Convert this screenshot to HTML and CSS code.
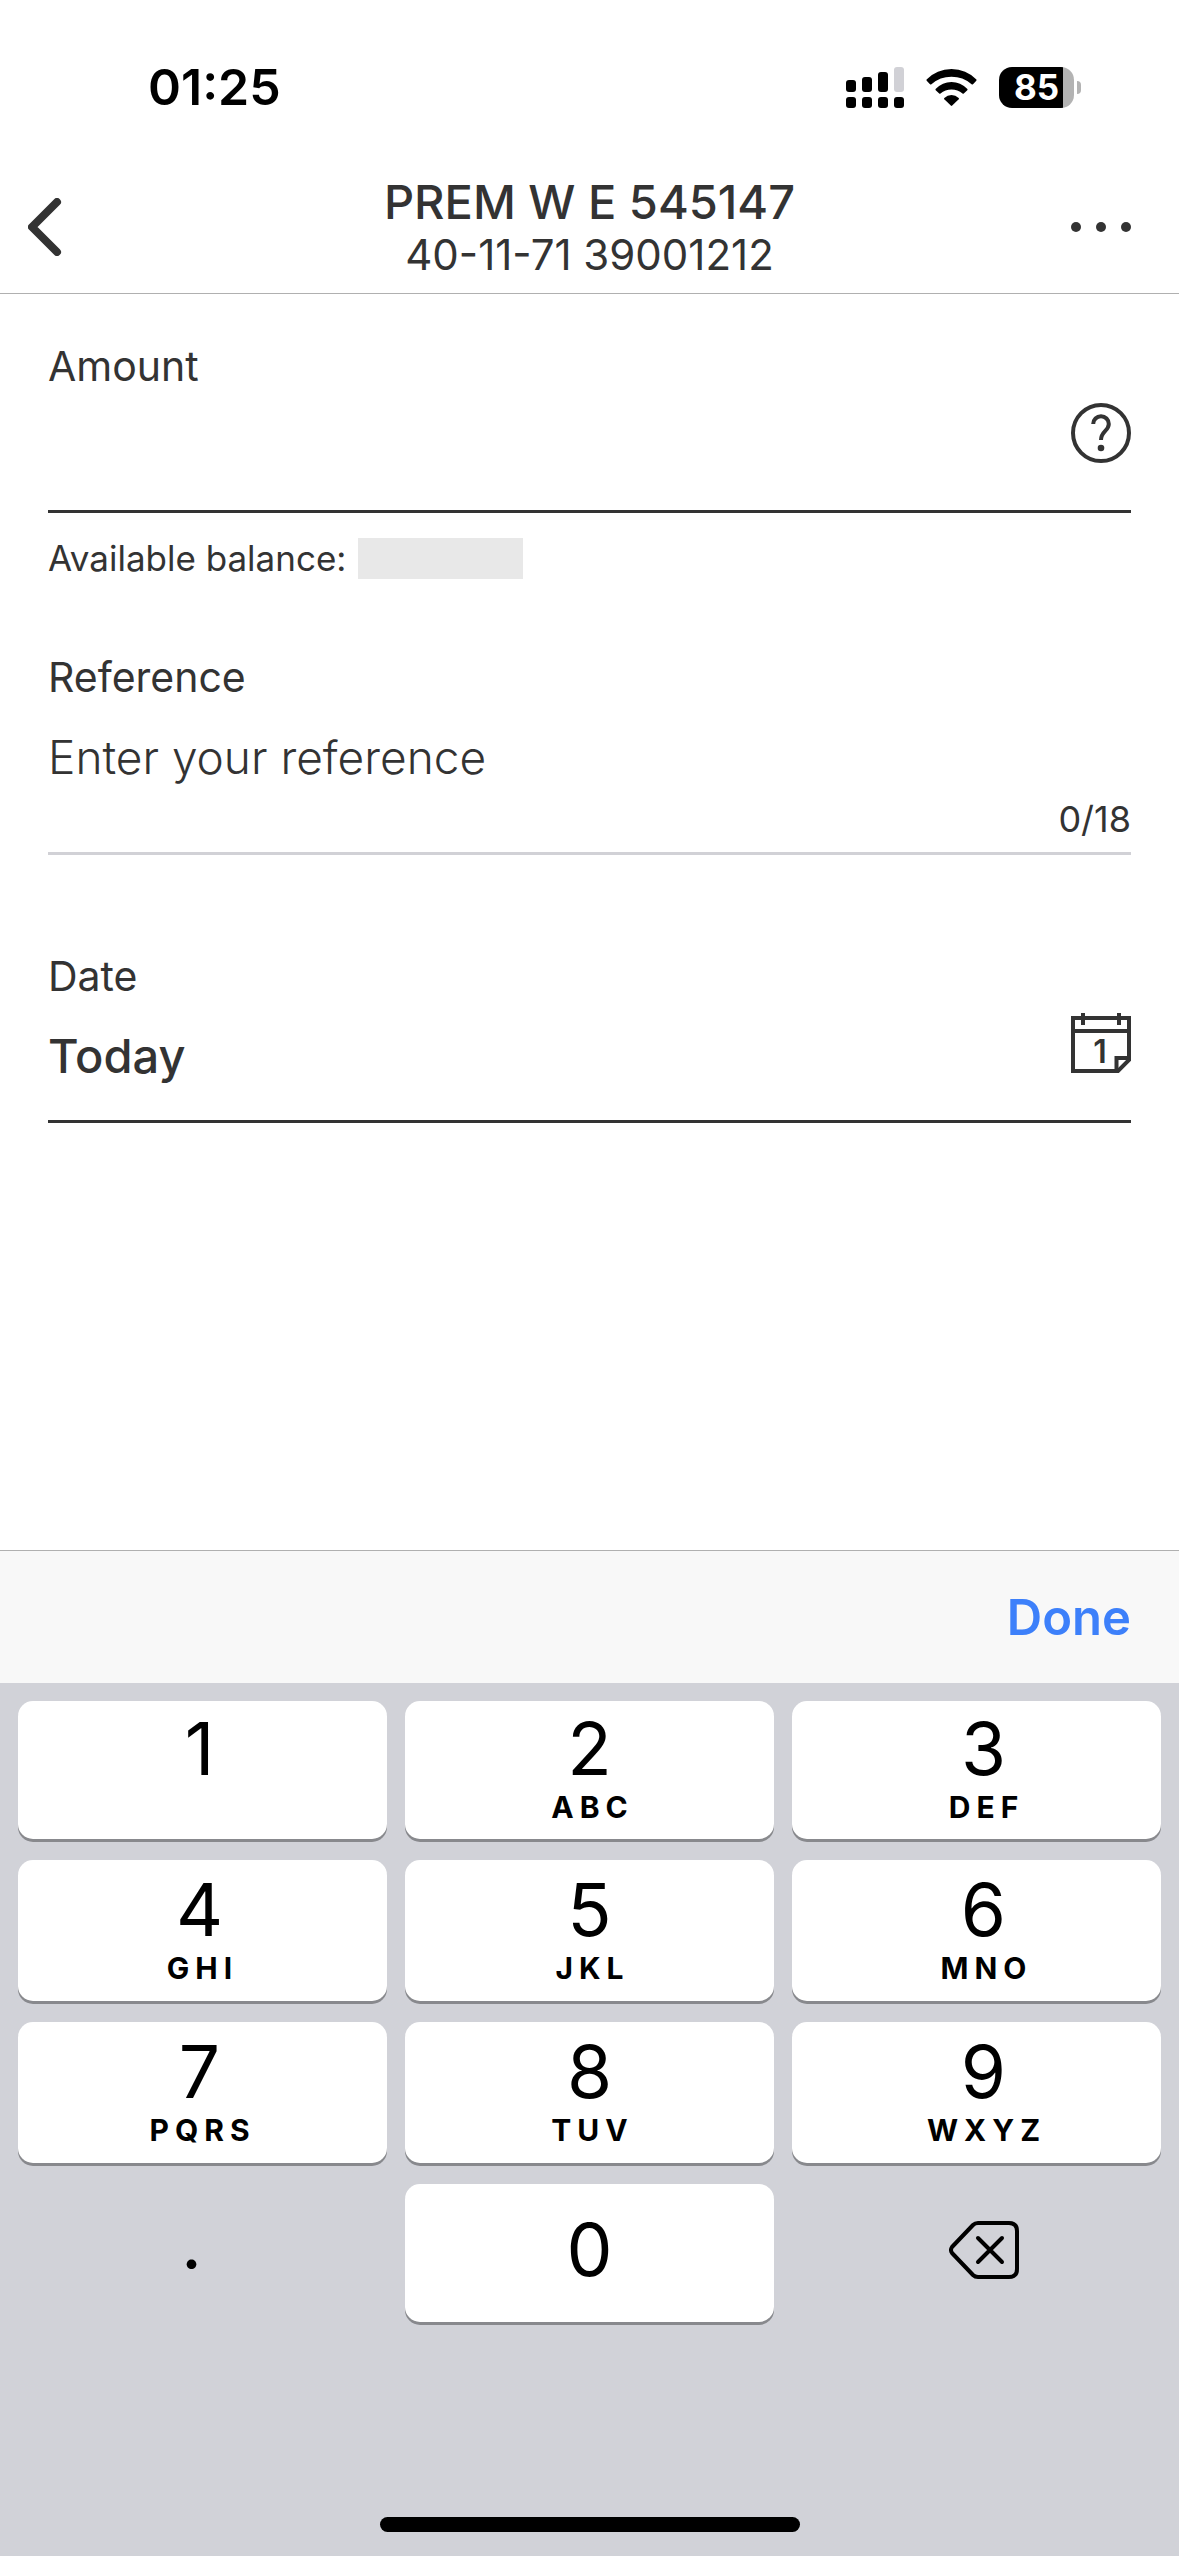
FILE: index.html
```html
<!DOCTYPE html>
<html lang="en">
<head>
  <meta charset="UTF-8">
  <meta name="viewport" content="width=device-width, initial-scale=1">
  <title>Make a payment</title>
  <link rel="stylesheet" href="styles.css">
</head>
<body>
  <div class="status-bar">
    <div class="time">01:25</div>
    <div class="status-icons">
      <svg class="signal" width="58" height="41" viewBox="0 0 58 41">
        <rect x="0" y="13" width="10" height="12" rx="3"/>
        <rect x="16" y="10" width="10" height="15" rx="3"/>
        <rect x="32" y="5" width="10" height="20" rx="3"/>
        <rect x="48" y="0" width="10" height="25" rx="3" fill="#d1d1d6"/>
        <rect x="0" y="30" width="10" height="11" rx="3"/>
        <rect x="16" y="30" width="10" height="11" rx="3"/>
        <rect x="32" y="30" width="10" height="11" rx="3"/>
        <rect x="48" y="30" width="10" height="11" rx="3"/>
      </svg>
      <svg class="wifi" width="51" height="37" viewBox="0 0 51 37">
        <path d="M0.6 10.6Q10.8 0 25.5 0T50.4 10.6Q50.8 11.2 50.3 11.8L47 15.2Q46.3 15.8 45.6 15.2Q37 7.8 25.5 7.8T5.4 15.2Q4.7 15.8 4 15.2L0.7 11.8Q0.2 11.2 0.6 10.6Z"/>
        <path d="M9.6 20Q16.5 13 25.5 13T41.4 20Q41.8 20.6 41.3 21.2L37.8 24.6Q37.2 25.1 36.5 24.6Q31.8 20.6 25.5 20.6T14.5 24.6Q13.8 25.1 13.2 24.6L9.7 21.2Q9.2 20.6 9.6 20Z"/>
        <path d="M18.3 29.1Q21.5 25.9 25.5 25.9T32.7 29.1Q33.2 29.7 32.7 30.3L26.2 36.6Q25.5 37.2 24.8 36.6L18.3 30.3Q17.8 29.7 18.3 29.1Z"/>
      </svg>
      <div class="battery"><span class="battery-level">85</span><span class="battery-cap"></span></div>
    </div>
  </div>

  <header class="nav">
    <button class="nav-button back" aria-label="Back">
      <svg width="34" height="58" viewBox="0 0 34 58">
        <path d="M29 4L4 29L29 54" fill="none" stroke="#333" stroke-width="8" stroke-linecap="round" stroke-linejoin="round"/>
      </svg>
    </button>
    <div class="account">
      <h1>PREM W E 545147</h1>
      <p>40-11-71 39001212</p>
    </div>
    <button class="nav-button more" aria-label="More">
      <svg width="60" height="10" viewBox="0 0 60 10" fill="#333">
        <circle cx="5" cy="5" r="5"/>
        <circle cx="30" cy="5" r="5"/>
        <circle cx="55" cy="5" r="5"/>
      </svg>
    </button>
  </header>

  <main class="form">
    <div class="field">
      <label for="amount">Amount</label>
      <div class="control">
        <input type="text" id="amount" inputmode="decimal">
        <button class="icon-button" aria-label="Help">
          <svg width="60" height="60" viewBox="0 0 60 60" fill="none" stroke="#333" stroke-width="4">
            <circle cx="30" cy="30" r="28"/>
            <path d="M22.200 21A7.800 7.800 0 0 1 37.800 21C37.800 28 30 28 30 37"/>
            <circle cx="30" cy="45" r="3.3" fill="#333" stroke="none"/>
          </svg>
        </button>
      </div>
      <p class="balance">Available balance: <span class="hidden-balance"></span></p>
    </div>

    <div class="field">
      <label for="reference">Reference</label>
      <div class="control with-counter">
        <input type="text" id="reference" maxlength="18" placeholder="Enter your reference">
        <div class="counter">0/18</div>
      </div>
    </div>

    <div class="field date">
      <label for="date">Date</label>
      <div class="control">
        <input type="text" id="date" value="Today" readonly>
        <button class="icon-button" aria-label="Choose date">
          <svg width="60" height="60" viewBox="0 0 60 60" fill="none" stroke="#333" stroke-width="4">
            <path d="M2 5H58V47L47 58H2Z"/>
            <path d="M2 18H58M12 0V12M48 0V12"/>
            <path d="M45.500 58V45H58"/>
            <text class="calendar-day" x="29" y="50">1</text>
          </svg>
        </button>
      </div>
    </div>
  </main>

  <div class="toolbar"><button class="done">Done</button></div>

  <div class="keyboard">
    <div class="keys">
      <button class="key"><span class="digit">1</span><span class="letters"></span></button>
      <button class="key"><span class="digit">2</span><span class="letters">ABC</span></button>
      <button class="key"><span class="digit">3</span><span class="letters">DEF</span></button>
      <button class="key"><span class="digit">4</span><span class="letters">GHI</span></button>
      <button class="key"><span class="digit">5</span><span class="letters">JKL</span></button>
      <button class="key"><span class="digit">6</span><span class="letters">MNO</span></button>
      <button class="key"><span class="digit">7</span><span class="letters">PQRS</span></button>
      <button class="key"><span class="digit">8</span><span class="letters">TUV</span></button>
      <button class="key"><span class="digit">9</span><span class="letters">WXYZ</span></button>
      <button class="key last-row plain point"><span class="digit">.</span></button>
      <button class="key last-row"><span class="digit">0</span></button>
      <button class="key last-row plain" aria-label="Delete">
        <svg width="70" height="60" viewBox="0 0 70 60" fill="none" stroke="#000" stroke-width="4" stroke-linecap="round" stroke-linejoin="round">
          <path d="M29 3H60Q68 3 68 11V49Q68 57 60 57H29Q26 57 24 55L3 33Q1 30 3 27L24 5Q26 3 29 3Z"/>
          <path d="M29 18L53 42M53 18L29 42"/>
        </svg>
      </button>
    </div>
    <div class="home-indicator"></div>
  </div>
</body>
</html>
```
FILE: styles.css
```css
* {
  box-sizing: border-box;
}

body {
  display: flex;
  flex-direction: column;
  min-height: 100vh;
  margin: 0;
  background: #fff;
  color: #333;
  font-family: Inter, "Liberation Sans", sans-serif;
}

h1, p {
  margin: 0;
}

button {
  padding: 0;
  border: none;
  background: none;
  color: inherit;
  font: inherit;
  cursor: pointer;
}

svg {
  display: block;
}

/* status bar */
.status-bar {
  display: flex;
  justify-content: space-between;
  align-items: center;
  height: 174px;
  padding: 0 98px 0 148px;
  color: #000;
}

.time {
  font-size: 50px;
  font-weight: 600;
}

.status-icons {
  display: flex;
  align-items: center;
  gap: 22px;
}

.battery {
  display: flex;
  align-items: center;
  gap: 3px;
}

.battery-level {
  width: 75px;
  height: 41px;
  border-radius: 13px;
  background: linear-gradient(to right, #000 85%, #b3b3b3 85%);
  color: #fff;
  font-size: 35px;
  font-weight: 700;
  line-height: 41px;
  text-align: center;
}

.battery-cap {
  width: 4px;
  height: 13px;
  border-radius: 0 4px 4px 0;
  background: #b3b3b3;
}

/* header */
.nav {
  display: flex;
  justify-content: space-between;
  align-items: center;
  padding: 0 48px 13px 28px;
  border-bottom: 1px solid #b0b0b0;
}

.nav-button {
  display: flex;
  width: 80px;
}

.more {
  justify-content: flex-end;
}

.account {
  margin-left: 20px;
  text-align: center;
}

.account h1 {
  font-size: 47px;
  font-weight: 500;
  line-height: 56px;
}

.account p {
  font-size: 42px;
  line-height: 50px;
}

/* form */
.form {
  flex: 1;
  padding: 46px 48px;
}

.field {
  margin-bottom: 72px;
}

.field.date {
  margin-top: 95px;
}

label {
  display: block;
  font-size: 41px;
  line-height: 52px;
}

.control {
  display: flex;
  align-items: flex-start;
  height: 121px;
  padding-top: 11px;
  border-bottom: 3px solid #333;
}

input {
  flex: 1;
  min-width: 0;
  height: 84px;
  padding: 0;
  border: none;
  outline: none;
  background: none;
  color: inherit;
  font: inherit;
  font-size: 47px;
  font-weight: 500;
}

input::placeholder {
  color: #333;
  font-size: 46px;
  font-weight: 300;
  opacity: 1;
}

.with-counter {
  flex-direction: column;
  align-items: stretch;
  height: auto;
  padding-bottom: 12px;
  border-color: #d1d1d6;
}

.with-counter input {
  flex: none;
}

.counter {
  font-size: 36px;
  line-height: 42px;
  text-align: right;
}

.balance {
  display: flex;
  gap: 12px;
  padding-top: 25px;
  font-size: 35px;
  line-height: 41px;
}

.hidden-balance {
  width: 165px;
  background: #e8e8e8;
}

.calendar-day {
  fill: #333;
  stroke: none;
  font-size: 32px;
  font-weight: 600;
  text-anchor: middle;
}

/* keyboard */
.toolbar {
  display: flex;
  justify-content: flex-end;
  align-items: center;
  height: 133px;
  padding: 0 48px;
  border-top: 1px solid #b0b0b0;
  background: #f8f8f8;
}

.done {
  color: #3d80fa;
  font-size: 49px;
  font-weight: 600;
}

.keyboard {
  padding: 18px 18px 24px;
  background: #d1d2d8;
  color: #000;
}

.keys {
  display: grid;
  grid-template-columns: repeat(3, 1fr);
  grid-template-rows: 138px 141px 141px 138px;
  gap: 21px 18px;
}

.key {
  display: flex;
  flex-direction: column;
  justify-content: center;
  align-items: center;
  border-radius: 15px;
  background: #fff;
  box-shadow: 0 3px 0 #88898d;
}

.key:nth-child(3n+1) {
  padding-right: 6px;
}

.key:nth-child(3n) {
  padding-left: 14px;
}

.key.last-row {
  padding-bottom: 6px;
}

.key.plain {
  background: none;
  box-shadow: none;
}

.key.point {
  padding: 0 22px 20px 0;
}

.digit {
  font-size: 73px;
  line-height: 74px;
}

.letters {
  height: 42px;
  padding-left: 6px;
  font-size: 30px;
  font-weight: 700;
  letter-spacing: 6px;
  line-height: 42px;
}

.home-indicator {
  width: 420px;
  height: 15px;
  margin: 195px auto 0;
  border-radius: 8px;
  background: #000;
}
```
